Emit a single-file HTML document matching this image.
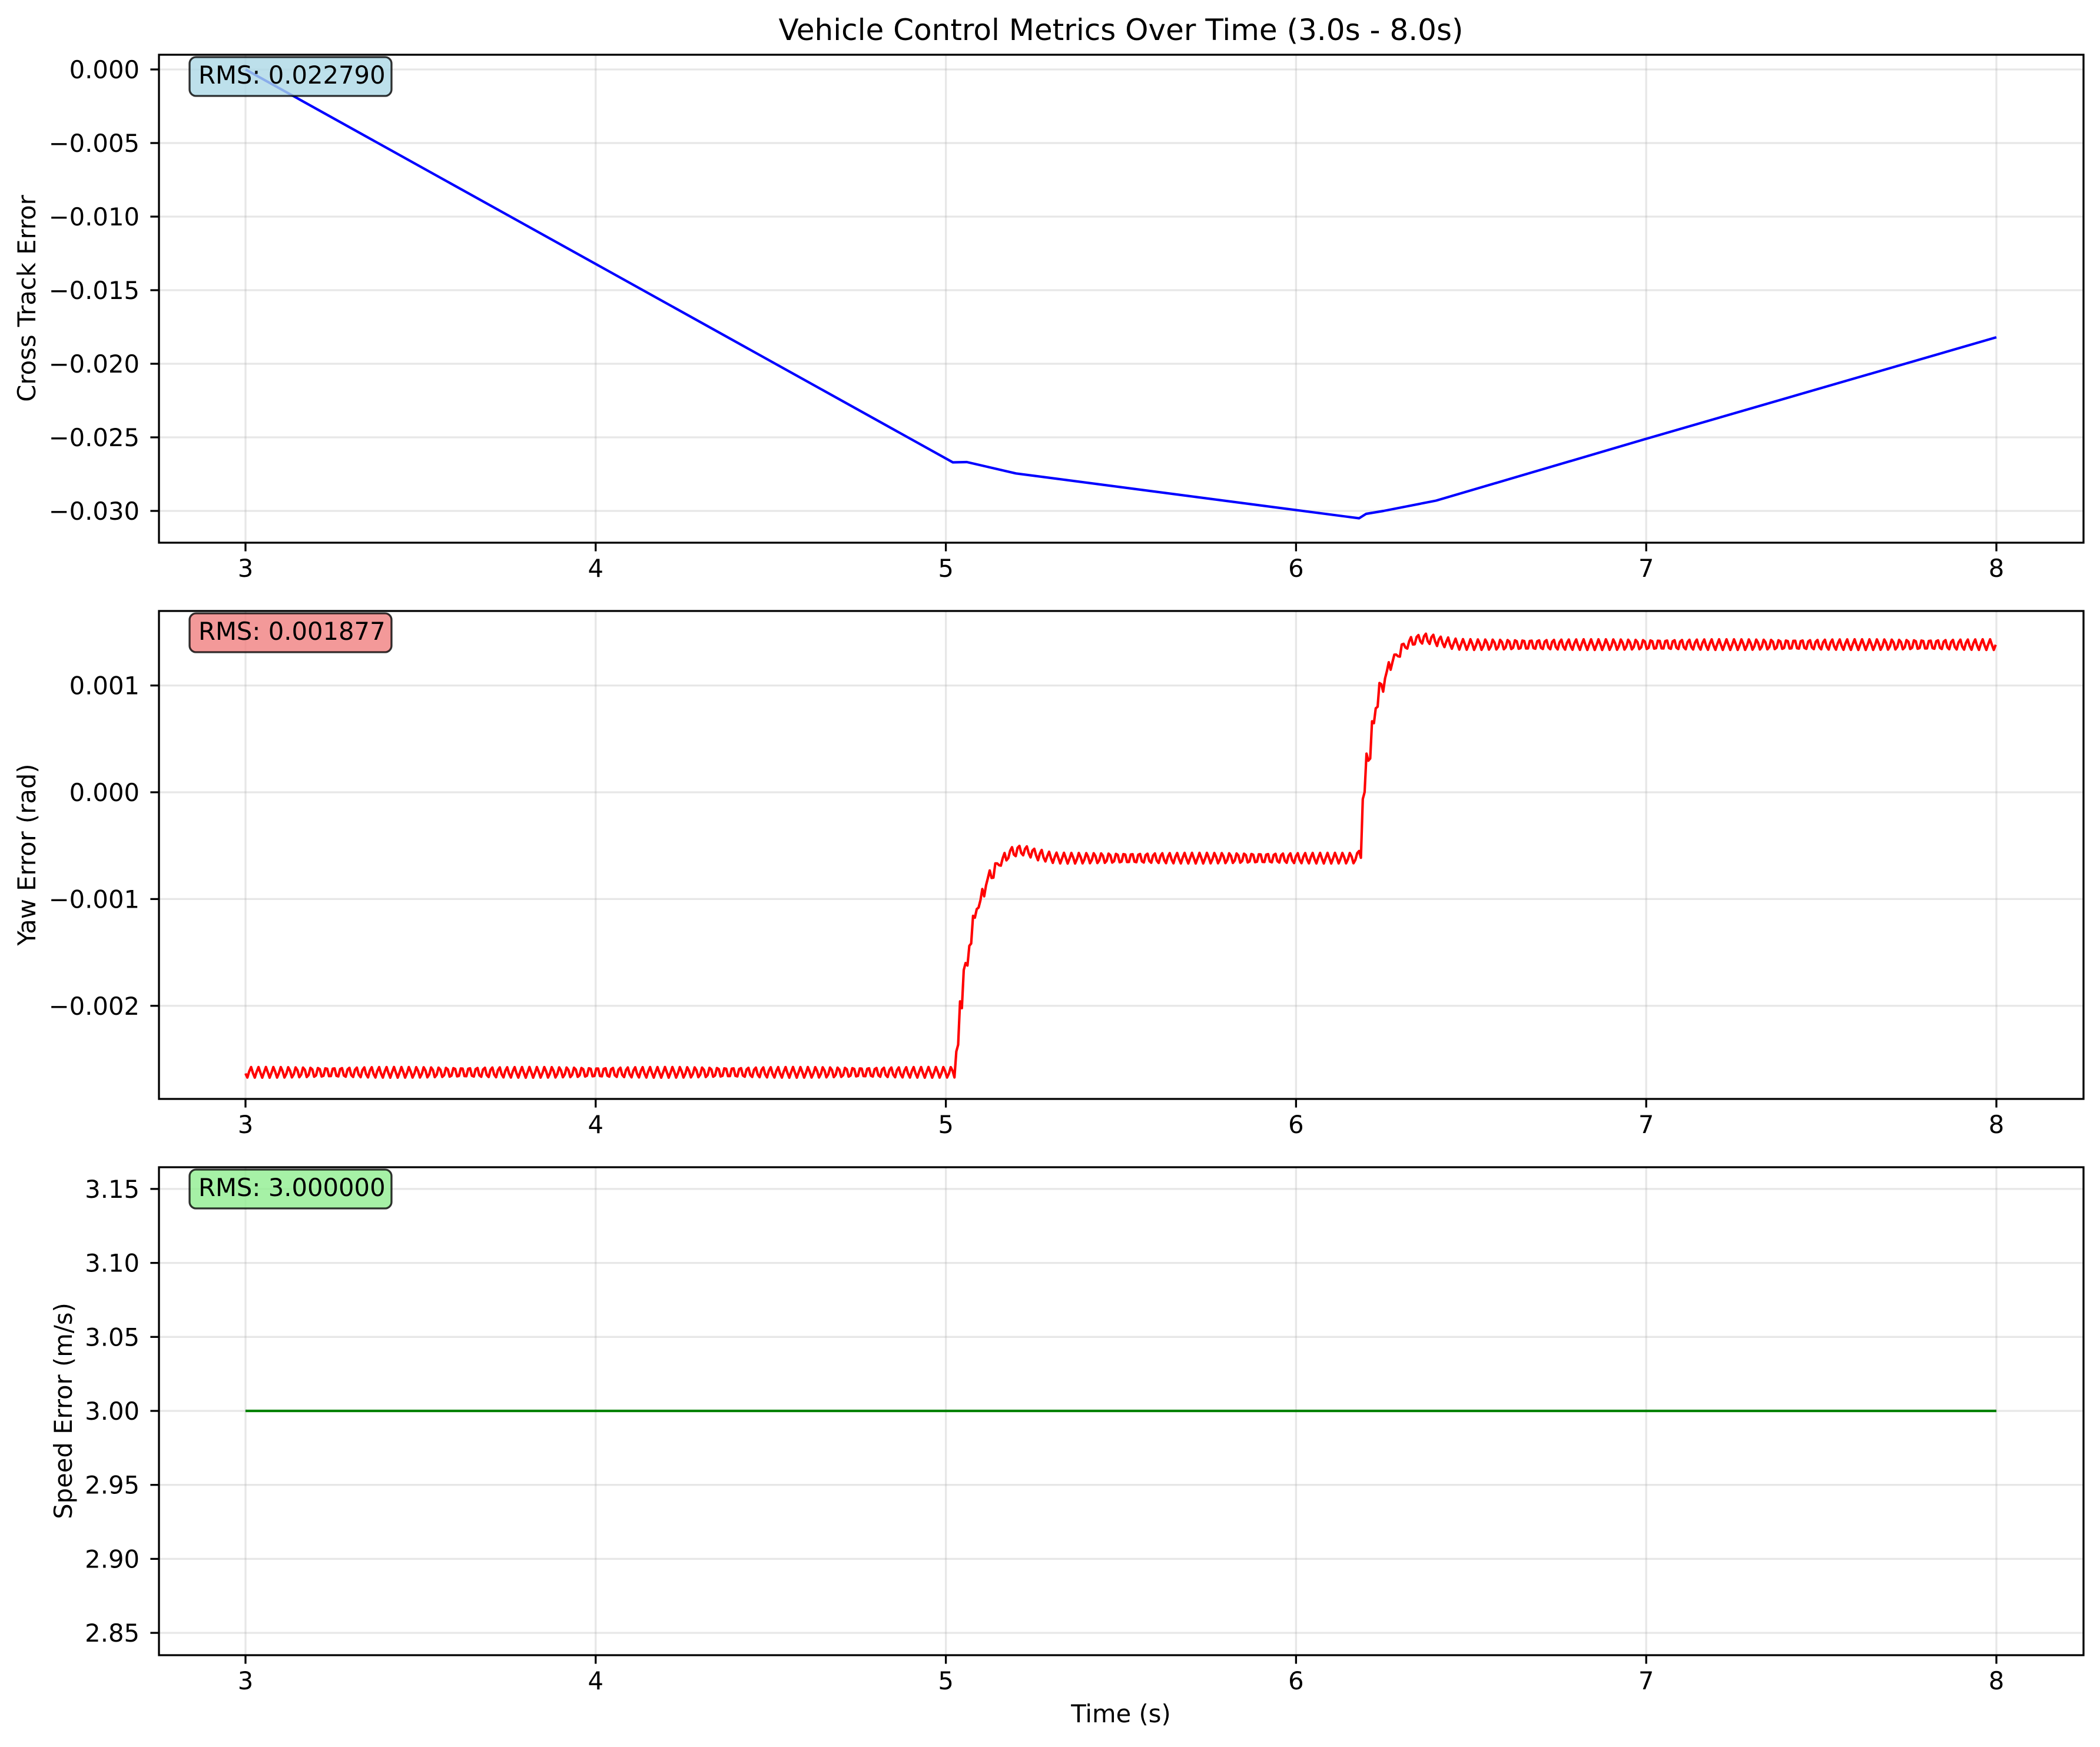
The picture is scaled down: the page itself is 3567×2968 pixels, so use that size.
<!DOCTYPE html>
<html><head><meta charset="utf-8"><style>
html,body{margin:0;padding:0;background:#fff}
svg{display:block}
text{font-family:"DejaVu Sans","Liberation Sans",sans-serif;fill:#000}
</style></head><body>
<svg id="s" xmlns="http://www.w3.org/2000/svg" width="3567" height="2968" viewBox="0 0 3567 2968">
<rect width="3567" height="2968" fill="#fff"/>
<g id="grid" stroke="#b0b0b0" stroke-opacity="0.3" stroke-width="3.3"></g>
<path id="blue" fill="none" stroke="#0000ff" stroke-width="4.2" stroke-linejoin="round"/>
<path id="red" fill="none" stroke="#ff0000" stroke-width="4.2" stroke-linejoin="round"/>
<line x1="417" y1="2397" x2="3391" y2="2397" stroke="#008000" stroke-width="4.2"/>
<g id="axes" fill="none" stroke="#000" stroke-width="3.3"></g>
<g id="labels" font-size="41.7"></g>
<text x="1904" y="68" font-size="50" text-anchor="middle">Vehicle Control Metrics Over Time (3.0s - 8.0s)</text>
<text x="1904" y="2926" font-size="41.7" text-anchor="middle">Time (s)</text>
<text transform="translate(60,507) rotate(-90)" font-size="41.7" text-anchor="middle">Cross Track Error</text>
<text transform="translate(60,1452) rotate(-90)" font-size="41.7" text-anchor="middle">Yaw Error (rad)</text>
<text transform="translate(122,2397) rotate(-90)" font-size="41.7" text-anchor="middle">Speed Error (m/s)</text>
<rect x="322" y="97" width="343" height="66" rx="11" fill="#add8e6" fill-opacity="0.8" stroke="#000" stroke-opacity="0.8" stroke-width="3.3"/>
<text x="337" y="142" font-size="41.7">RMS: 0.022790</text>
<rect x="322" y="1042" width="343" height="66" rx="11" fill="#f08080" fill-opacity="0.8" stroke="#000" stroke-opacity="0.8" stroke-width="3.3"/>
<text x="337" y="1087" font-size="41.7">RMS: 0.001877</text>
<rect x="322" y="1987" width="343" height="66" rx="11" fill="#90ee90" fill-opacity="0.8" stroke="#000" stroke-opacity="0.8" stroke-width="3.3"/>
<text x="337" y="2032" font-size="41.7">RMS: 3.000000</text>
</svg>
<script>
(function(){
var NS="http://www.w3.org/2000/svg";
function X(t){return 417+(t-3)*594.8;}
var L=270,R=3539;
var panels=[
 {top:93,bot:922,yt:function(v){return 118-v*25000;},ticks:[0,-0.005,-0.01,-0.015,-0.02,-0.025,-0.03],fmt:function(v){return v.toFixed(3);}},
 {top:1038,bot:1867,yt:function(v){return 1346-v*181400;},ticks:[0.001,0,-0.001,-0.002],fmt:function(v){return v.toFixed(3);}},
 {top:1983,bot:2812,yt:function(v){return 2397-(v-3)*2514;},ticks:[3.15,3.10,3.05,3.00,2.95,2.90,2.85],fmt:function(v){return v.toFixed(2);}}
];
var grid=document.getElementById('grid'),axes=document.getElementById('axes'),lab=document.getElementById('labels');
function el(p,tag,a,txt){var e=document.createElementNS(NS,tag);for(var k in a)e.setAttribute(k,a[k]);if(txt!=null)e.textContent=txt;p.appendChild(e);return e;}
panels.forEach(function(p){
 for(var t=3;t<=8;t++){var x=X(t);
  el(grid,'line',{x1:x,y1:p.top,x2:x,y2:p.bot});
  el(axes,'line',{x1:x,y1:p.bot,x2:x,y2:p.bot+14.6});
  el(lab,'text',{x:x,y:p.bot+58,'text-anchor':'middle'},String(t));
 }
 p.ticks.forEach(function(v){var y=p.yt(v);
  el(grid,'line',{x1:L,y1:y,x2:R,y2:y});
  el(axes,'line',{x1:L-14.6,y1:y,x2:L,y2:y});
  var s=p.fmt(v); if(v<0)s='\u2212'+s.slice(1); if(s=='\u22120.000')s='0.000';
  el(lab,'text',{x:237,y:y+15,'text-anchor':'end'},s);
 });
 el(axes,'rect',{x:L,y:p.top,width:R-L,height:p.bot-p.top});
});
var bp=[[3,0],[5.02,-0.0267],[5.06,-0.02668],[5.1,-0.0269],[5.2,-0.02745],[6.18,-0.0305],[6.2,-0.0302],[6.25,-0.03],[6.4,-0.0293],[6.6,-0.0279],[7,-0.0251],[8,-0.0182]];
var d='';
bp.forEach(function(q,i){d+=(i?'L':'M')+X(q[0]).toFixed(1)+' '+panels[0].yt(q[1]).toFixed(1);});
document.getElementById('blue').setAttribute('d',d);
function base(t){
 var v=-0.002623;
 if(t>=5.02){var s=t-5.02;v+= (0.002006)*(1-Math.exp(-s/0.045))+0.00011*Math.exp(-Math.pow((s-0.17)/0.07,2));}
 if(t>=6.174){var s2=t-6.174;v+= 0.002000*(1-Math.exp(-s2/0.04))+0.00008*Math.exp(-Math.pow((s2-0.17)/0.07,2));}
 return v;
}
var rd='',dt=0.0053,n=0;
for(var t=3;t<=8.0001;t+=dt){
 var tq=Math.floor(t/0.0125)*0.0125;
 var v=base(tq)+0.00005*Math.sin(2*Math.PI*t/0.0215);
 rd+=(n++?'L':'M')+X(t).toFixed(1)+' '+panels[1].yt(v).toFixed(1);
}
document.getElementById('red').setAttribute('d',rd);
})();
</script>
</body></html>
